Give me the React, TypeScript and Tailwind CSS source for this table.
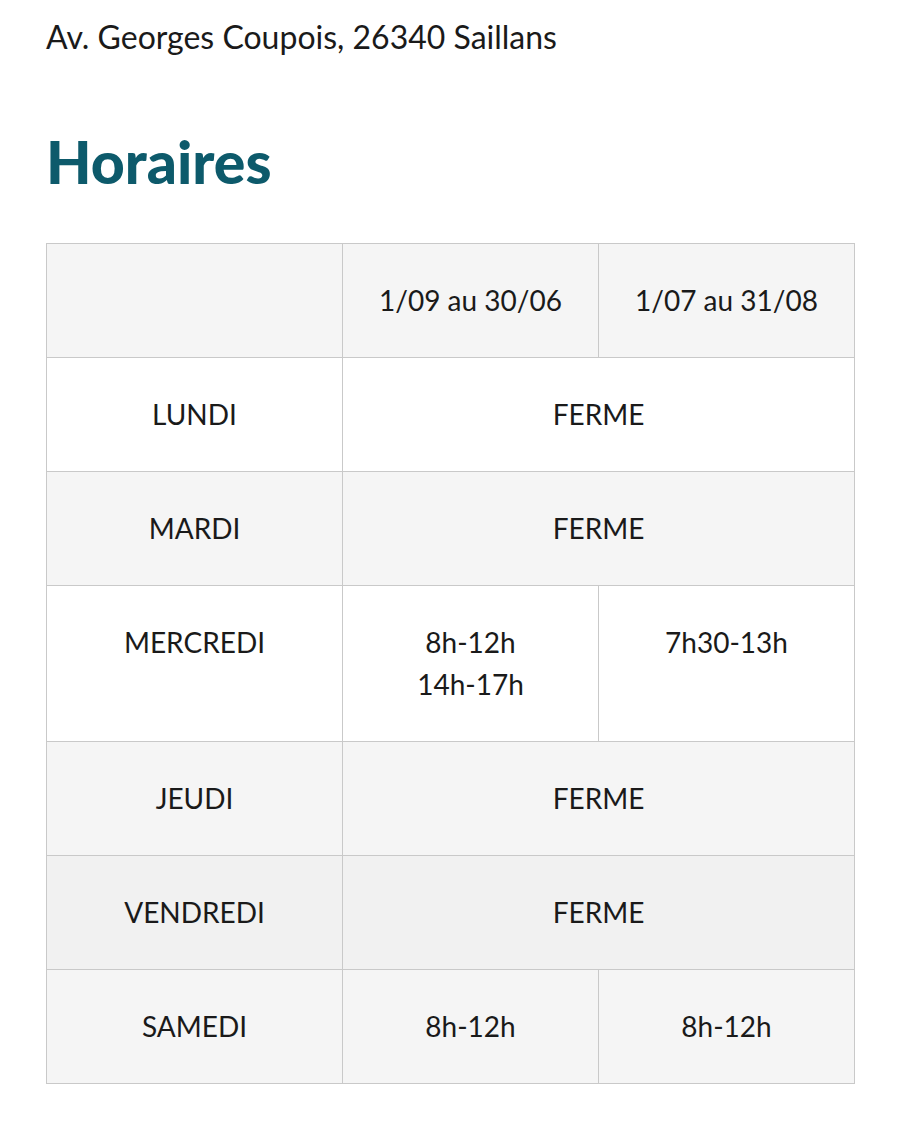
const rows: { day: string; cells: string[][]; bg: string }[] = [
  { day: "LUNDI", cells: [["FERME"]], bg: "bg-white" },
  { day: "MARDI", cells: [["FERME"]], bg: "bg-[#f5f5f5]" },
  { day: "MERCREDI", cells: [["8h-12h", "14h-17h"], ["7h30-13h"]], bg: "bg-white" },
  { day: "JEUDI", cells: [["FERME"]], bg: "bg-[#f5f5f5]" },
  { day: "VENDREDI", cells: [["FERME"]], bg: "bg-[#f1f1f1]" },
  { day: "SAMEDI", cells: [["8h-12h"], ["8h-12h"]], bg: "bg-[#f5f5f5]" },
];

const cell = "border border-[#c9c9c9] px-4 pt-[35px] pb-[36px] align-top text-center leading-[42px]";

export default function App() {
  return (
    <main className="min-h-[1133px] bg-white px-[46px] pt-[14px] font-['Lato',_'Liberation_Sans',_sans-serif] text-[#1a1a1a]">
      <p className="text-[32px] leading-[46px]">Av. Georges Coupois, 26340 Saillans</p>

      <h2 className="mt-[70px] font-['Lato',_sans-serif] text-[59px] font-black leading-[64px] text-[#0d5a6b]">
        Horaires
      </h2>

      <table className="mt-[49px] w-[808px] table-fixed border-collapse text-[28px]">
        <colgroup>
          <col className="w-[296px]" />
          <col className="w-[256px]" />
          <col className="w-[256px]" />
        </colgroup>
        <thead>
          <tr className="bg-[#f5f5f5]">
            <th className={`${cell} font-normal`}></th>
            <th className={`${cell} font-normal`}>1/09 au 30/06</th>
            <th className={`${cell} font-normal`}>1/07 au 31/08</th>
          </tr>
        </thead>
        <tbody>
          {rows.map((r) => (
            <tr key={r.day} className={r.bg}>
              <td className={cell}>{r.day}</td>
              {r.cells.map((lines, i) => (
                <td key={i} colSpan={r.cells.length === 1 ? 2 : 1} className={cell}>
                  {lines.map((l) => (
                    <div key={l}>{l}</div>
                  ))}
                </td>
              ))}
            </tr>
          ))}
        </tbody>
      </table>
    </main>
  );
}
